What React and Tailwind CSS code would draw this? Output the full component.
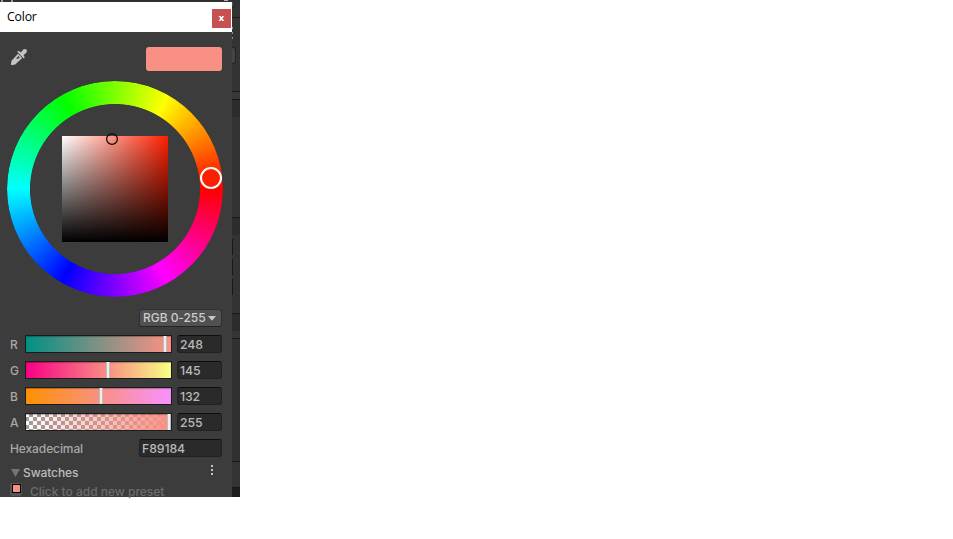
import React from "react";

const FONT = "font-['Inter','Liberation_Sans',sans-serif]";

const channels = [
  { label: "R", value: "248", fill: "bg-[linear-gradient(90deg,#009184,#ff9184)]", knob: "left-[137px]" },
  { label: "G", value: "145", fill: "bg-[linear-gradient(90deg,#f80084,#f8ff84)]", knob: "left-[80px]" },
  { label: "B", value: "132", fill: "bg-[linear-gradient(90deg,#ff9100_0%,#f89184_52%,#f891ff)]", knob: "left-[73px]" },
  {
    label: "A",
    value: "255",
    fill: "bg-[linear-gradient(90deg,#f8918400,#f89184),repeating-conic-gradient(#a09a9a_0_25%,#ffffff_0_50%)] bg-[length:100%_100%,8px_8px] bg-[position:0_0,-1px_-1px]",
    knob: "left-[141px]",
  },
];

function Field({ children, className }) {
  return (
    <div className={`flex h-[18px] items-center rounded-[3px] border border-[#212121] border-t-[#0d0d0d] bg-[#2a2a2a] pl-[2px] pt-[2px] text-[12.3px] font-medium leading-none tracking-[-0.1px] text-[#b8b8b8] ${className}`}>
      {children}
    </div>
  );
}

function Channel({ label, value, fill, knob }) {
  return (
    <div className="flex h-[26px] items-start">
      <span className="w-[15px] pt-[2px] text-[12px] font-medium leading-[15px] text-[#a8a8a8]">{label}</span>
      <div className="relative h-[18px] w-[147px] border border-[#1c1c1c]">
        <div className={`h-full w-full shadow-[inset_0_1px_1px_rgba(0,0,0,0.28)] ${fill}`} />
        <div className={`absolute top-0 h-4 w-1 border-x border-[#bcbcbc] bg-[#eeeeee] ${knob}`} />
      </div>
      <Field className="ml-[5px] w-[45px]">{value}</Field>
    </div>
  );
}

function Eyedropper() {
  return (
    <svg width="18" height="18" viewBox="0 0 18 18" className="block">
      <path d="M8 5.8 12.2 10 5.2 16.4 2.2 17H1V14.8L2 12.2Z" fill="#c4c4c4" />
      <path d="M8.4 8 9.8 9.4 8.2 10.8H6Z" fill="#3c3c3c" />
      <path d="M7.2 3.8 8.7 2.8 10.7 4.4 13.3 1.5Q15 .3 16.4 1.6 17.7 3.2 16.3 4.7L13.5 7.3 14.8 9.2 13.6 10.6Z" fill="#c4c4c4" />
    </svg>
  );
}

function Wheel() {
  return (
    <div className="relative ml-[7px] mt-[10px] flex h-[216px] w-[216px] items-center justify-center">
      <div className="absolute inset-0 rounded-full bg-[conic-gradient(from_90deg,#f00,#f0f,#00f,#0ff,#0f0,#ff0,#f00)] [mask-image:radial-gradient(circle,transparent_84.6px,#000_85.4px)]" />
      <div className="h-[106px] w-[106px] bg-[linear-gradient(0deg,#000,transparent),linear-gradient(90deg,#fff,#ff1f00)]" />
      <svg className="absolute inset-0 overflow-visible" width="216" height="216" viewBox="0 0 216 216">
        <circle cx="105" cy="58" r="5.4" fill="none" stroke="#160b0a" strokeWidth="1.3" />
        <circle cx="204" cy="97" r="10" fill="#ff1f00" stroke="#ffffff" strokeWidth="2" />
      </svg>
    </div>
  );
}

function EditorEdge() {
  return (
    <div className="flex h-[495px] w-2 flex-col overflow-hidden bg-[#333333]">
      <div className="h-[6px] w-[3px] rounded-br-[3px] border-b border-r border-[#252525] bg-[#444444]" />
      <div className="mt-[9px] h-px bg-[#191919]" />
      <div className="flex h-[29px] flex-col gap-[3px] pt-[9px]">
        <i className="h-[2px] w-px bg-[#909090]" />
        <i className="h-[2px] w-px bg-[#909090]" />
        <i className="h-[2px] w-px bg-[#909090]" />
      </div>
      <div className="h-[17px] w-1 rounded-r-[3px] border border-l-0 border-[#242424] bg-[#444444]" />
      <div className="mt-[27px] h-px bg-[#191919]" />
      <div className="h-[7px] bg-[#383838]" />
      <div className="h-px bg-[#191919]" />
      <div className="h-[17px] bg-[#2c2c2c]" />
      <div className="h-[100px] bg-[#333333]" />
      <div className="h-px bg-[#191919]" />
      <div className="h-[17px] bg-[#2c2c2c]" />
      <div className="flex h-[78px] flex-col gap-1 bg-[#333333] pt-[4px]">
        <i className="h-4 w-px bg-[#181818]" />
        <i className="h-4 w-px bg-[#181818]" />
        <i className="h-4 w-px bg-[#181818]" />
      </div>
      <div className="h-px bg-[#191919]" />
      <div className="h-[17px] bg-[#2c2c2c]" />
      <div className="h-[7px] bg-[#353535]" />
      <div className="h-px bg-[#191919]" />
      <div className="h-[122px] bg-[#303030]" />
      <div className="h-px bg-[#191919]" />
      <div className="h-[25px] bg-[#343434]" />
      <div className="h-px bg-[#191919]" />
      <div className="h-[6px] w-full grow bg-[#1e1c1c]" />
    </div>
  );
}

export default function App() {
  return (
    <div className={`h-[539px] w-[953px] overflow-hidden bg-white ${FONT}`}>
      <div className="h-[497px] w-[240px]">
        <div className="flex h-[2px] bg-[#303030]">
          <i className="ml-[1px] h-px w-3 border-x-2 border-dotted border-[#999999]" />
          <i className="ml-auto mr-[12px] h-px w-1 bg-[#b0b0b0]" />
        </div>
        <div className="flex">
          <main className="h-[495px] w-[232px] bg-[#3c3c3c]">
            <header className="flex h-[30px] bg-white pl-[7px] pr-px">
              <h1 className="pt-[7px] font-['Open_Sans','Noto_Sans',sans-serif] text-[12.3px] leading-[16px] tracking-[-0.2px] text-black">Color</h1>
              <button className="ml-auto mt-[7px] flex h-[19px] w-[19px] items-center justify-center bg-[#c75050] pb-px font-['DejaVu_Sans',sans-serif] text-[9px] font-bold leading-none text-white">x</button>
            </header>
            <div className="flex pl-[10px] pr-[10px] pt-[15px]">
              <button className="mt-px h-[18px] w-[18px]"><Eyedropper /></button>
              <div className="ml-auto h-6 w-[76px] rounded-[3px] bg-[#f89184]" />
            </div>
            <Wheel />
            <div className="flex h-[38px] justify-end pr-[10px] pt-3">
              <button className="flex h-[18px] w-[83px] items-center gap-[2px] whitespace-nowrap rounded-[3px] border border-[#303030] border-b-[#242424] bg-[#515151] pl-[3px] text-[12px] font-medium leading-none tracking-[-0.05px] text-[#cccccc]">
                RGB 0-255
                <svg className="mt-px" width="8" height="5" viewBox="0 0 8 5"><path d="M0 0H8L4 4.8Z" fill="#c8c8c8" /></svg>
              </button>
            </div>
            <div className="pl-[10px]">
              {channels.map((c) => <Channel key={c.label} {...c} />)}
            </div>
            <div className="flex h-[27px] pl-[10px] pr-[10px]">
              <span className="pt-[2px] text-[12px] font-medium leading-[15px] tracking-[-0.1px] text-[#a8a8a8]">Hexadecimal</span>
              <Field className="ml-auto w-[83px]">F89184</Field>
            </div>
            <div className="flex h-[17px] pl-[11px]">
              <svg className="mt-[3px]" width="9" height="8" viewBox="0 0 9 8"><path d="M0 0H9L4.5 8Z" fill="#747474" /></svg>
              <span className="ml-[3px] text-[12px] font-medium leading-[13px] tracking-[-0.1px] text-[#bcbcbc]">Swatches</span>
              <div className="-mt-px ml-auto mr-[19px] flex flex-col gap-[2px]">
                <i className="h-[2px] w-[2px] bg-[#c4c4c4]" />
                <i className="h-[2px] w-[2px] bg-[#c4c4c4]" />
                <i className="h-[2px] w-[2px] bg-[#c4c4c4]" />
              </div>
            </div>
            <div className="flex h-[14px] pl-[10px]">
              <div className="h-[13px] w-3 rounded-[2px] bg-[#555555] pl-[2px] pt-px">
                <div className="h-[9px] w-[9px] border border-black bg-[#f89184]" />
              </div>
              <span className="ml-2 h-[14px] whitespace-nowrap pt-px text-[12px] font-medium leading-[16px] tracking-[-0.01px] text-[#6c6c6c]">Click to add new preset</span>
            </div>
          </main>
          <EditorEdge />
        </div>
      </div>
    </div>
  );
}
